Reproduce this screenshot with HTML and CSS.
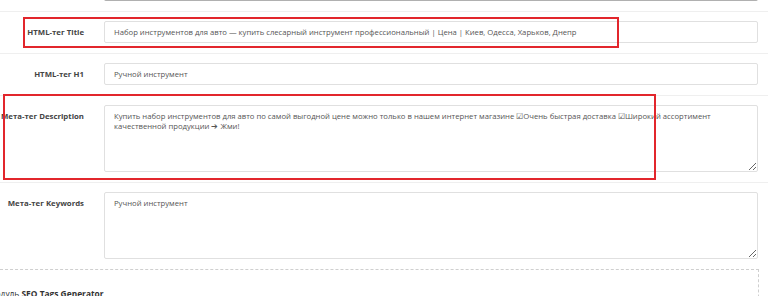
FILE: index.html
```html
<!DOCTYPE html>
<html lang="ru">
<head>
    <meta charset="UTF-8">
    <title>SEO</title>
    <link rel="stylesheet" href="styles.css">
</head>
<body>
    <div class="form">
        <div class="form-row first">
            <label class="control-label"></label>
            <div class="form-control prev"></div>
        </div>
        <div class="form-row">
            <label class="control-label">HTML-тег Title</label>
            <input class="form-control" type="text" value="Набор инструментов для авто — купить слесарный инструмент профессиональный | Цена | Киев, Одесса, Харьков, Днепр">
        </div>
        <div class="form-row">
            <label class="control-label">HTML-тег H1</label>
            <input class="form-control" type="text" value="Ручной инструмент">
        </div>
        <div class="form-row">
            <label class="control-label">Мета-тег Description</label>
            <textarea class="form-control area">Купить набор инструментов для авто по самой выгодной цене можно только в нашем интернет магазине ☑Очень быстрая доставка ☑Широкий ассортимент качественной продукции ➔ Жми!</textarea>
        </div>
        <div class="form-row">
            <label class="control-label">Мета-тег Keywords</label>
            <textarea class="form-control area">Ручной инструмент</textarea>
        </div>
        <div class="module-box">
            Модуль <b>SEO Tags Generator</b>
        </div>
    </div>

    <!-- выделения поверх формы -->
    <div class="mark mark-title"></div>
    <div class="mark mark-desc"></div>
</body>
</html>
```

FILE: styles.css
```css
body {
    margin: 0;
    background: #fff;
    font-family: 'Open Sans', sans-serif;
    font-size: 7.7px;
    color: #555;
    overflow: hidden;
    position: relative;
    height: 296px;
}
.form {
    margin-top: -30px;
}
.form-row {
    display: grid;
    grid-template-columns: 84px 1fr;
    column-gap: 20px;
    padding: 9px 10px 10px 0;
    border-top: 1px solid #efefef;
}
.form-row.first {
    border-top: none;
}
.control-label {
    text-align: right;
    font-size: 7.8px;
    font-weight: 700;
    color: #444;
    padding-top: 6px;
    line-height: 10px;
    white-space: nowrap;
}
.form-control {
    box-sizing: border-box;
    width: 100%;
    height: 22px;
    margin: 0;
    padding: 5px 9px;
    border: 1px solid #e0e0e0;
    border-radius: 2px;
    font-family: inherit;
    font-size: 7.7px;
    line-height: 10px;
    color: #555;
    background: #fff;
    outline: none;
}
.form-control.prev {
    border-color: #c8c8c8;
    border-bottom: 2px solid #b0b0b0;
}
.form-control.area {
    height: 67px;
    resize: vertical;
}
.module-box {
    margin-left: -30px;
    margin-right: 9px;
    padding: 18px 17px;
    border: 1px dashed #cfcfcf;
    font-size: 8.4px;
    color: #333;
    white-space: nowrap;
}
.mark {
    position: absolute;
    border: 2px solid #e2262c;
    box-sizing: border-box;
}
.mark-title {
    left: 23px;
    top: 17px;
    width: 596px;
    height: 31px;
}
.mark-desc {
    left: 3px;
    top: 94px;
    width: 653px;
    height: 86px;
}
```
